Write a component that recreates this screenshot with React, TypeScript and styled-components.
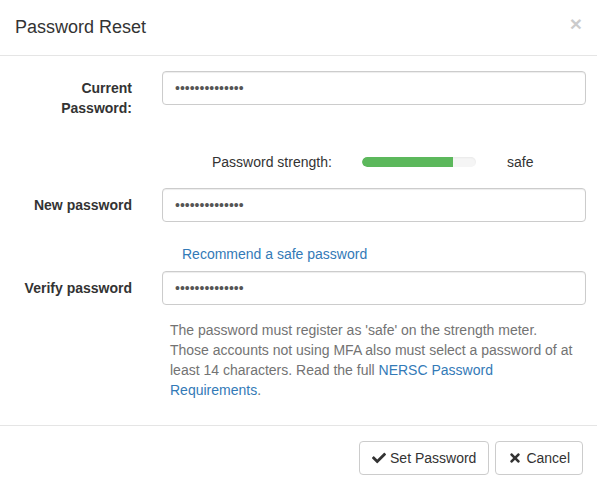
import React from 'react'
import styled, { createGlobalStyle } from 'styled-components'
import { FaCheck, FaTimes } from 'react-icons/fa'

const GlobalStyle = createGlobalStyle`
    html, body {
        margin: 0;
        padding: 0;
        background: #fff;
    }
    body {
        font-family: "Liberation Sans", Helvetica, Arial, sans-serif;
        font-size: 14px;
        line-height: 20px;
        color: #333;
    }
    * {
        box-sizing: border-box;
    }
`

const Modal = styled.div`
    width: 597px;
    display: flex;
    flex-direction: column;
    background: #fff;
`

const Header = styled.div`
    display: flex;
    justify-content: space-between;
    align-items: flex-start;
    padding: 15px;
    border-bottom: 1px solid #e5e5e5;
`

const Title = styled.h4`
    margin: 0;
    font-size: 18px;
    font-weight: 400;
    line-height: 25px;
    color: #333;
`

const Close = styled.button`
    background: none;
    border: none;
    padding: 0;
    margin-top: -2px;
    font-family: inherit;
    font-size: 21px;
    font-weight: 700;
    line-height: 1;
    color: #000;
    opacity: 0.2;
    text-shadow: 0 1px 0 #fff;
    cursor: pointer;
`

const Body = styled.form`
    padding: 15px 11px 25px 0;
    display: flex;
    flex-direction: column;
`

const FormGroup = styled.div`
    display: grid;
    grid-template-columns: 147px 1fr;
`

const Label = styled.label`
    padding: 7px 15px 0 0;
    text-align: right;
    font-weight: 700;
    line-height: 20px;
`

const Input = styled.input`
    display: block;
    height: 34px;
    padding: 6px 12px;
    border: 1px solid #ccc;
    border-radius: 4px;
    box-shadow: inset 0 1px 1px rgba(0, 0, 0, 0.075);
    font-family: inherit;
    font-size: 14px;
    color: #555;
    margin-left: 15px;
    width: calc(100% - 15px);
`

const StrengthRow = styled.div`
    display: flex;
    align-items: center;
    padding-left: 212px;
    margin: 34px 0 16px;
    line-height: 20px;
`

const StrengthLabel = styled.span`
    width: 150px;
    white-space: nowrap;
`

const Meter = styled.div`
    width: 114px;
    height: 10px;
    border-radius: 5px;
    background: #f5f5f5;
    overflow: hidden;
    box-shadow: inset 0 1px 2px rgba(0, 0, 0, 0.05);
`

const MeterFill = styled.div`
    height: 100%;
    background: #5cb85c;
    border-radius: 5px 0 0 5px;
`

const StrengthValue = styled.span`
    margin-left: 31px;
`

const Link = styled.a`
    color: #337ab7;
    text-decoration: none;
`

const RecommendRow = styled.div`
    padding-left: 182px;
    margin: 22px 0 7px;
`

const HelpBlock = styled.p`
    margin: 15px 0 0 170px;
    width: 405px;
    color: #737373;
    line-height: 20px;
`

const Footer = styled.div`
    display: flex;
    justify-content: flex-end;
    gap: 6px;
    padding: 15px 14px 15px 15px;
    border-top: 1px solid #e5e5e5;
`

const Button = styled.button`
    display: inline-flex;
    align-items: center;
    gap: 4px;
    height: 34px;
    padding: 6px 12px;
    border: 1px solid #ccc;
    border-radius: 4px;
    background: #fff;
    color: #333;
    font-family: inherit;
    font-size: 14px;
    line-height: 20px;
    cursor: pointer;

    svg {
        width: 14px;
        height: 14px;
    }
`

export default function App(): React.ReactElement {
    const strength = 80

    return <>
        <GlobalStyle />
        <Modal>
            <Header>
                <Title>Password Reset</Title>
                <Close type="button" aria-label="Close">&times;</Close>
            </Header>
            <Body onSubmit={(e) => e.preventDefault()}>
                <FormGroup>
                    <Label>Current<br />Password:</Label>
                    <Input type="password" defaultValue="currentpass123" />
                </FormGroup>

                <StrengthRow>
                    <StrengthLabel>Password strength:</StrengthLabel>
                    <Meter>
                        <MeterFill style={{ width: `${strength}%` }} />
                    </Meter>
                    <StrengthValue>safe</StrengthValue>
                </StrengthRow>

                <FormGroup>
                    <Label>New password</Label>
                    <Input type="password" defaultValue="newpassword123" />
                </FormGroup>

                <RecommendRow>
                    <Link href="#">Recommend a safe password</Link>
                </RecommendRow>

                <FormGroup>
                    <Label>Verify password</Label>
                    <Input type="password" defaultValue="newpassword123" />
                </FormGroup>

                <HelpBlock>
                    The password must register as 'safe' on the strength meter.
                    Those accounts not using MFA also must select a password of at
                    least 14 characters. Read the full <Link href="#">NERSC Password Requirements</Link>.
                </HelpBlock>
            </Body>
            <Footer>
                <Button type="button"><FaCheck /> Set Password</Button>
                <Button type="button"><FaTimes /> Cancel</Button>
            </Footer>
        </Modal>
    </>
}
